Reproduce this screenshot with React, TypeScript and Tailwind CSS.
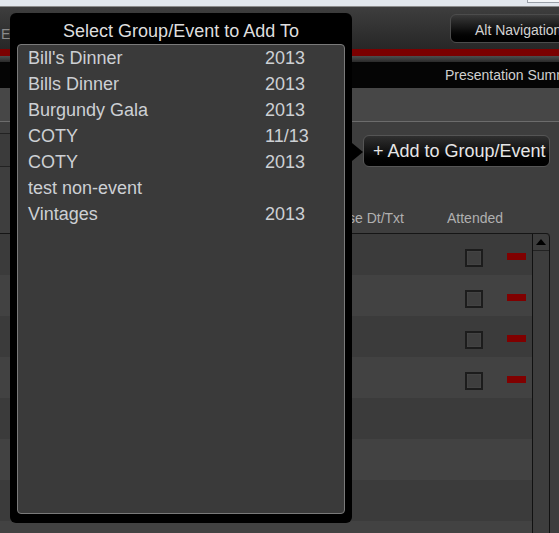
export default function App() {
  const items: [string, string][] = [
    ["Bill's Dinner", "2013"],
    ["Bills Dinner", "2013"],
    ["Burgundy Gala", "2013"],
    ["COTY", "11/13"],
    ["COTY", "2013"],
    ["test non-event", ""],
    ["Vintages", "2013"],
  ];
  const rows = Array.from({ length: 8 }, (_, i) => i);
  return (
    <div className="relative w-[559px] h-[533px] overflow-hidden bg-[#3e3e3e] font-['Liberation_Sans',Arial,sans-serif]">
      {/* top light strip */}
      <div className="h-[7px] bg-[#e2e7ed] border-b border-[#8c8c8c] flex justify-end">
        <div className="w-[32px] h-[3px] border-l border-b border-[#9aa0a8] bg-[#f4f6f8]" />
      </div>
      {/* header */}
      <div className="h-[42px] bg-gradient-to-b from-[#3e3e3e] to-[#272727] flex items-start">
        <span className="mt-[19px] ml-[1px] text-[14px] leading-[16px] text-[#8a8a8a]">Events</span>
        <div className="ml-auto -mr-[21px] mt-[7px] h-[29px] w-[130px] shrink-0 rounded-[6px] border border-[#4c4c4c] bg-gradient-to-b from-[#3a3a3a] via-[#141414] to-[#000] flex items-center pl-[24px] pt-[3px] text-[14px] text-[#d2d2d2]">
          Alt Navigation
        </div>
      </div>
      <div className="h-[7px] bg-[#7b0000]" />
      <div className="h-[6px] bg-gradient-to-b from-[#4e4e4e] to-[#2a2a2a]" />
      <div className="h-[26px] bg-[#050505] flex items-center pl-[445px] pt-[1px] text-[14px] text-[#d0d0d0] whitespace-nowrap">
        Presentation Summary
      </div>
      <div className="h-[33px] bg-[#474747]" />
      <div className="h-px bg-[#6c6c6c]" />
      {/* content */}
      <div className="pr-[9px] flex flex-col">
        <div className="mt-[11px] flex items-start">
          <div className="h-[34px] w-[300px] -ml-[5px] border-y border-[#222] bg-[#3b3b3b]" />
          <div className="ml-auto mt-[2px] h-[32px] w-[187px] rounded-[6px] border border-[#555] bg-gradient-to-b from-[#303030] via-[#121212] to-[#000] flex items-center pl-[9px] text-[18px] text-[#e6e6e6] whitespace-nowrap">
            + Add to Group/Event
          </div>
        </div>
        <div className="mt-[43px] flex text-[14px] leading-[16px] text-[#b0b0b0]">
          <div className="w-[404px] text-right">Response Dt/Txt</div>
          <div className="ml-[43px]">Attended</div>
        </div>
        <div className="mt-[7px] flex border-t border-[#151515] rounded-tr-[4px]">
          <div className="flex-1 flex flex-col">
            {rows.map((i) => (
              <div
                key={i}
                className={`h-[41px] shrink-0 flex items-start pl-[465px] ${i % 2 === 0 ? "bg-[#3b3b3b]" : "bg-[#424242]"}`}
              >
                {i < 4 && (
                  <>
                    <div className="mt-[15px] w-[18px] h-[18px] border-2 border-[#1c1c1c] bg-[#3e3e3e] shadow-[inset_0_0_2px_#555]" />
                    <div className="ml-[24px] mt-[19px] w-[19px] h-[7px] bg-[#800000]" />
                  </>
                )}
              </div>
            ))}
          </div>
          <div className="w-[18px] border-x border-[#111] bg-[#3d3d3d] rounded-tr-[4px] flex flex-col">
            <div className="h-[17px] border-b border-[#222] flex items-center justify-center">
              <div className="w-0 h-0 border-x-[5px] border-x-transparent border-b-[6px] border-b-black" />
            </div>
          </div>
        </div>
      </div>

      {/* popup */}
      <div className="absolute left-[10px] top-[13px] w-[342px] h-[510px] rounded-[6px] bg-black flex flex-col">
        <div className="h-[31px] pt-[8px] text-center text-[18px] leading-[20px] text-[#dedede] whitespace-nowrap">
          Select Group/Event to Add To
        </div>
        <div className="mx-[7px] h-[470px] rounded-[4px] border border-[#7a7a7a] bg-[#3a3a3a] flex flex-col pl-[10px]">
          {items.map(([name, yr], i) => (
            <div key={i} className="h-[26px] flex text-[18px] leading-[26px] text-[#cdd0d4] whitespace-nowrap">
              <div className="w-[237px]">{name}</div>
              <div>{yr}</div>
            </div>
          ))}
        </div>
        <div className="absolute left-[342px] top-[130px] w-0 h-0 border-y-[9px] border-y-transparent border-l-[11px] border-l-black" />
      </div>
    </div>
  );
}
